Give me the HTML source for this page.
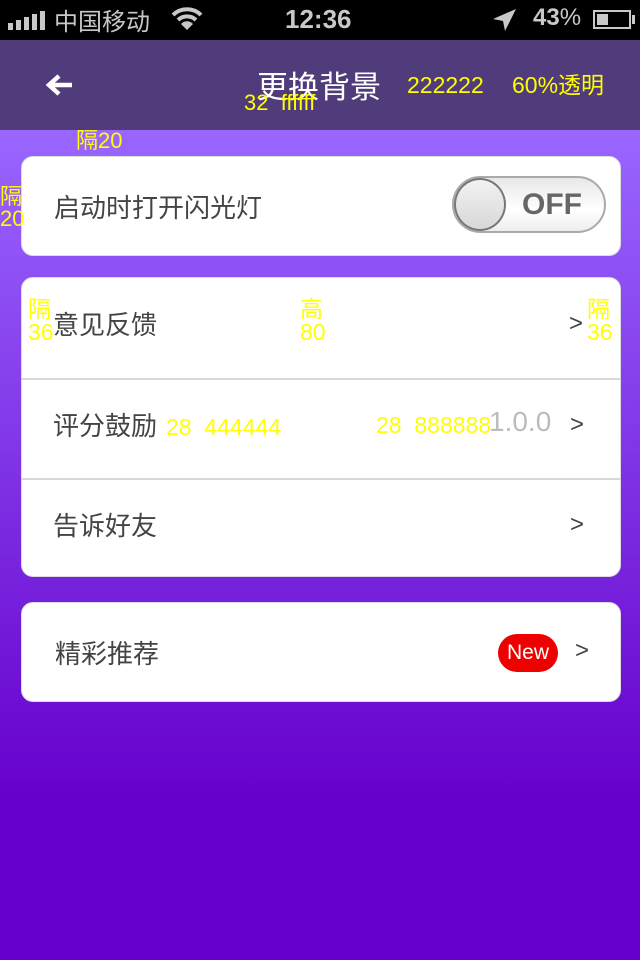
<!DOCTYPE html>
<html><head><meta charset="utf-8"><style>
*{margin:0;padding:0;box-sizing:border-box}
body{width:640px;height:960px;overflow:hidden;position:relative;font-family:"Liberation Sans","Noto Sans CJK SC",sans-serif;background:linear-gradient(#9966ff 130px,#6600cc 800px,#6600cc 960px)}
.abs{position:absolute}
.sb{left:0;top:0;width:640px;height:40px;background:#000;color:#c8c8c8;font-size:24px}
.hd{left:0;top:40px;width:640px;height:90px;background:#503c7a}
.card{position:absolute;left:21px;width:600px;background:#fff;border-radius:12px;border:1px solid #ddd}
.row{position:absolute;left:0;width:598px;height:100px}
.lbl{position:absolute;left:31px;top:27px;font-size:26px;color:#444}
.arr{position:absolute;font-size:24px;color:#444;top:32px;left:548px}
.y{position:absolute;color:#ffff00;font-size:22px;line-height:1}
</style></head><body>
<div class="abs sb">
 <div class="abs" style="left:8px;top:11px;display:flex;align-items:flex-end;gap:3px">
  <div style="width:5px;height:7px;background:#c8c8c8"></div><div style="width:5px;height:10px;background:#c8c8c8"></div><div style="width:5px;height:13px;background:#c8c8c8"></div><div style="width:5px;height:16px;background:#c8c8c8"></div><div style="width:5px;height:19px;background:#c8c8c8"></div>
 </div>
 <div class="abs" style="left:54px;top:2px">中国移动</div>
 <svg class="abs" style="left:170px;top:6px" width="34" height="26" viewBox="0 0 34 26"><path d="M3 9 A20 20 0 0 1 31 9" stroke="#c8c8c8" stroke-width="4" fill="none"/><path d="M8 14 A13 13 0 0 1 26 14" stroke="#c8c8c8" stroke-width="4" fill="none"/><path d="M17 24 L11 18 A8 8 0 0 1 23 18Z" fill="#c8c8c8"/></svg>
 <div class="abs" style="left:285px;top:4px;font-weight:bold;font-size:26px">12:36</div>
 <svg class="abs" style="left:492px;top:8px" width="26" height="24"><path d="M24 1 L1 11 L11 13 L13 23Z" fill="#c8c8c8"/></svg>
 <div class="abs" style="left:533px;top:4px;font-weight:bold;font-size:24px">43<span style="font-weight:normal">%</span></div>
 <div class="abs" style="left:593px;top:10px;width:38px;height:19px;border:2px solid #c8c8c8"><div style="margin:2px;width:11px;height:11px;background:#c8c8c8"></div></div>
 <div class="abs" style="left:632px;top:15px;width:3px;height:9px;background:#c8c8c8"></div>
</div>
<div class="abs hd">
 <svg class="abs" style="left:45px;top:33px" width="30" height="24"><path d="M27 12 H5 M14 3 L4 12 L14 21" stroke="#fff" stroke-width="4.5" fill="none"/></svg>
 <div class="abs" style="left:257px;top:22px;color:#fff;font-size:31px">更换背景</div>
 <div class="y" style="left:407px;top:34px;font-size:23px">222222</div>
 <div class="y" style="left:512px;top:34px;font-size:23px">60%透明</div>
 <div class="y" style="left:244px;top:52px">32&nbsp; ffffff</div>
</div>
<div class="y" style="left:76px;top:130px">隔20</div>
<div class="card" style="top:156px;height:100px">
 <div class="lbl" style="left:32px;top:31px">启动时打开闪光灯</div>
 <div class="abs" style="left:430px;top:19px;width:154px;height:57px;border-radius:29px;border:2px solid #aaa;background:linear-gradient(#e8e8e8,#fff 60%,#eee)">
  <div class="abs" style="left:0;top:0;width:52px;height:53px;border-radius:50%;border:2px solid #777;background:linear-gradient(#f2f2f2,#d8d8d8)"></div>
  <div class="abs" style="left:68px;top:10px;font-size:30px;font-weight:bold;color:#666">OFF</div>
 </div>
</div>
<div class="y" style="left:0;top:186px">隔<br>20</div>
<div class="card" style="top:277px;height:300px">
 <div class="row" style="top:0"><div class="lbl">意见反馈</div><div class="arr" style="left:547px">&gt;</div></div>
 <div class="abs" style="left:-1px;top:100px;width:600px;height:2px;background:#d8d8d8"></div>
 <div class="row" style="top:101px"><div class="lbl">评分鼓励</div><div class="abs" style="left:467px;top:27px;font-size:28px;color:#bbb">1.0.0</div><div class="arr">&gt;</div></div>
 <div class="abs" style="left:-1px;top:200px;width:600px;height:2px;background:#d8d8d8"></div>
 <div class="row" style="top:201px"><div class="lbl">告诉好友</div><div class="arr">&gt;</div></div>
</div>
<div class="y" style="left:28px;top:298px;font-size:23px">隔<br>36</div>
<div class="y" style="left:300px;top:298px;font-size:23px">高<br>80</div>
<div class="y" style="left:587px;top:298px;font-size:23px">隔<br>36</div>
<div class="y" style="left:166px;top:416px;font-size:23px">28&nbsp; 444444</div>
<div class="y" style="left:376px;top:414px;font-size:23px">28&nbsp; 888888</div>
<div class="card" style="top:602px;height:100px">
 <div class="lbl" style="left:33px;top:31px">精彩推荐</div>
 <div class="abs" style="left:476px;top:31px;width:60px;height:38px;border-radius:19px;background:#e00;color:#fff;font-size:21px;text-align:center;line-height:38px">New</div>
 <div class="arr" style="left:553px;top:34px">&gt;</div>
</div>
</body></html>
